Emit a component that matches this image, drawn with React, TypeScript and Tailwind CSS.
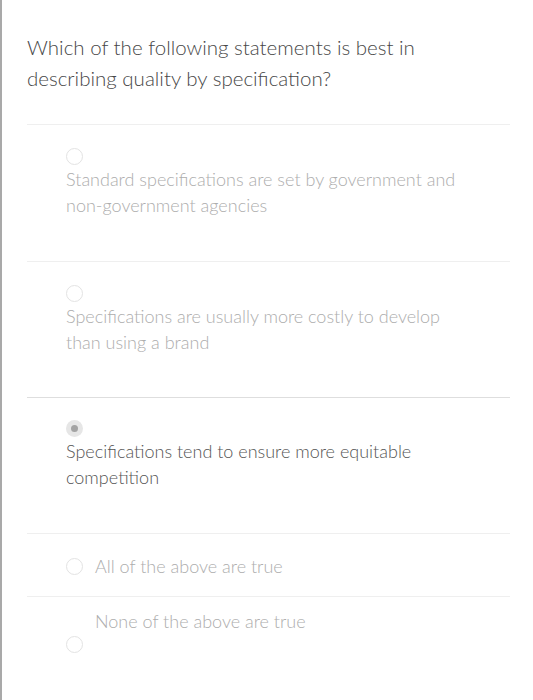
import React from "react";

function Radio({ checked = false }: { checked?: boolean }) {
  if (checked) {
    return (
      <div className="w-[17px] h-[17px] rounded-full bg-[#e6e6e6] flex items-center justify-center shrink-0">
        <div className="w-[7px] h-[7px] rounded-full bg-[#a3a3a3]" />
      </div>
    );
  }
  return <div className="w-[17px] h-[17px] rounded-full border-[1.5px] border-[#e3e3e3] bg-white shrink-0" />;
}

export default function App() {
  return (
    <div
      className="w-[533px] h-[700px] bg-white flex overflow-hidden font-light"
      style={{ fontFamily: "Lato, 'Noto Sans', sans-serif" }}
    >
      <div className="w-[2px] h-full bg-[#a9a9a9] shrink-0" />
      <div className="flex-1 pl-[25px] pr-[23px]">
        <div className="pt-[32px] pb-[30px] text-[20.5px] leading-[31px] text-[#474747]">
          Which of the following statements is best in
          <br />
          describing quality by specification?
        </div>
        <div className="h-px bg-[#efefef]" />

        <div className="pl-[39px] pt-[23px] pb-[43px]">
          <Radio />
          <div className="text-[18px] leading-[26px] text-[#adadad] mt-[1px]">
            Standard specifications are set by government and
            <br />
            non-government agencies
          </div>
        </div>
        <div className="h-px bg-[#efefef]" />

        <div className="pl-[39px] pt-[23px] pb-[42px]">
          <Radio />
          <div className="text-[18px] leading-[26px] text-[#adadad] mt-[1px]">
            Specifications are usually more costly to develop
            <br />
            than using a brand
          </div>
        </div>
        <div className="h-px bg-[#dedede]" />

        <div className="pl-[39px] pt-[22px] pb-[43px]">
          <Radio checked />
          <div className="text-[18px] leading-[26px] text-[#555555] mt-[1px]">
            Specifications tend to ensure more equitable
            <br />
            competition
          </div>
        </div>
        <div className="h-px bg-[#efefef]" />

        <div className="pl-[39px] pt-[19px] pb-[17px] flex items-center gap-[12px]">
          <Radio />
          <div className="text-[18px] leading-[26px] text-[#adadad]">All of the above are true</div>
        </div>
        <div className="h-px bg-[#efefef]" />

        <div className="pl-[39px] pt-[11px]">
          <div className="pl-[29px] text-[18px] leading-[26px] text-[#adadad]">None of the above are true</div>
          <div className="mt-[2px]">
            <Radio />
          </div>
        </div>
      </div>
    </div>
  );
}
